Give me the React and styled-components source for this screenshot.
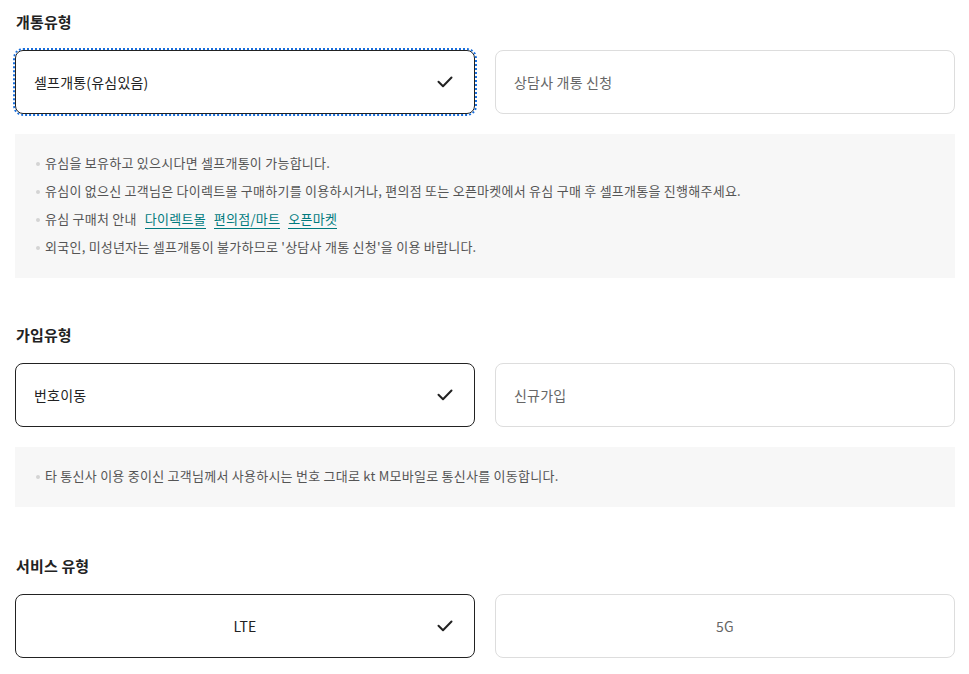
import React from "react";
import styled, { createGlobalStyle, css } from "styled-components";

const GlobalStyle = createGlobalStyle`
  html, body {
    margin: 0;
    padding: 0;
    background: #fff;
  }
  body {
    font-family: "Noto Sans CJK KR", "Noto Sans", sans-serif;
    color: #222;
  }
  * { box-sizing: border-box; }
`;

const Page = styled.div`
  padding: 11px 14px 0 15px;
  display: flex;
  flex-direction: column;
`;

const Section = styled.section`
  display: flex;
  flex-direction: column;
  margin-top: ${(p) => p.$gap || 0}px;
`;

const Title = styled.h3`
  margin: 0 0 17px 1px;
  font-size: 15px;
  line-height: 22px;
  font-weight: 700;
  letter-spacing: 0.15px;
  color: #222;
`;

const Options = styled.div`
  display: grid;
  grid-template-columns: 1fr 1fr;
  gap: 20px;
`;

const Option = styled.button`
  position: relative;
  height: 64px;
  border-radius: 8px;
  background: #fff;
  border: 1px solid ${(p) => (p.$selected ? "#222" : "#ddd")};
  display: flex;
  align-items: center;
  justify-content: ${(p) => (p.$center ? "center" : "flex-start")};
  padding: 0 22px 0 18px;
  font-family: inherit;
  font-size: 14px;
  letter-spacing: 0.2px;
  color: ${(p) => (p.$selected ? "#222" : "#666")};
  text-align: left;
  cursor: pointer;
  ${(p) =>
    p.$focused &&
    css`
      outline: 2px dotted #1a6fdc;
      outline-offset: 0px;
    `}
`;

const OptionLabel = styled.span`
  flex: ${(p) => (p.$center ? "none" : "1")};
  margin-left: ${(p) => (p.$center ? "4px" : "0")};
`;

const Check = styled.svg`
  position: absolute;
  right: 21px;
  top: 50%;
  width: 16px;
  height: 12px;
  margin-top: -6px;
`;

const InfoBox = styled.ul`
  margin: 20px 0 0 0;
  padding: 15px 20px 17px 20px;
  list-style: none;
  background: #f7f7f7;
`;

const InfoItem = styled.li`
  position: relative;
  padding-left: 10px;
  font-size: 13px;
  line-height: 28px;
  letter-spacing: 0.25px;
  color: #555;
  &::before {
    content: "";
    position: absolute;
    left: 1px;
    top: 13px;
    width: 4px;
    height: 4px;
    border-radius: 50%;
    background: #d4d4d4;
  }
`;

const LinkGroup = styled.span`
  display: inline-flex;
  gap: 8px;
  margin-left: 8px;
`;

const InfoLink = styled.a`
  color: #007a7e;
  text-decoration: none;
  border-bottom: 1.5px solid #007a7e;
  line-height: 18px;
  display: inline-block;
`;

const CheckIcon = () => (
  <Check viewBox="0 0 16 12" fill="none">
    <polyline
      points="1.5,5.8 6,10.2 14.5,1.5"
      stroke="#222"
      strokeWidth="2"
      strokeLinecap="round"
      strokeLinejoin="round"
    />
  </Check>
);

const Choice = ({ label, selected, center, focused }) => (
  <Option $selected={selected} $center={center} $focused={focused}>
    <OptionLabel $center={center}>{label}</OptionLabel>
    {selected && <CheckIcon />}
  </Option>
);

export default function App() {
  return (
    <>
      <GlobalStyle />
      <Page>
        <Section>
          <Title>개통유형</Title>
          <Options>
            <Choice label="셀프개통(유심있음)" selected focused />
            <Choice label="상담사 개통 신청" />
          </Options>
          <InfoBox>
            <InfoItem>유심을 보유하고 있으시다면 셀프개통이 가능합니다.</InfoItem>
            <InfoItem>
              유심이 없으신 고객님은 다이렉트몰 구매하기를 이용하시거나, 편의점 또는 오픈마켓에서 유심 구매 후 셀프개통을 진행해주세요.
            </InfoItem>
            <InfoItem>
              유심 구매처 안내
              <LinkGroup>
                <InfoLink href="#">다이렉트몰</InfoLink>
                <InfoLink href="#">편의점/마트</InfoLink>
                <InfoLink href="#">오픈마켓</InfoLink>
              </LinkGroup>
            </InfoItem>
            <InfoItem>
              외국인, 미성년자는 셀프개통이 불가하므로 '상담사 개통 신청'을 이용 바랍니다.
            </InfoItem>
          </InfoBox>
        </Section>

        <Section $gap={46}>
          <Title>가입유형</Title>
          <Options>
            <Choice label="번호이동" selected />
            <Choice label="신규가입" />
          </Options>
          <InfoBox>
            <InfoItem>
              타 통신사 이용 중이신 고객님께서 사용하시는 번호 그대로 kt M모바일로 통신사를 이동합니다.
            </InfoItem>
          </InfoBox>
        </Section>

        <Section $gap={48}>
          <Title>서비스 유형</Title>
          <Options>
            <Choice label="LTE" selected center />
            <Choice label="5G" center />
          </Options>
        </Section>
      </Page>
    </>
  );
}
